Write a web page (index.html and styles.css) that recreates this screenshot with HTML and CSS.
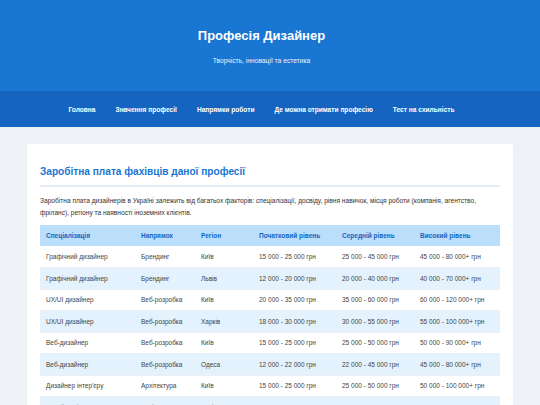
FILE: index.html
```html
<!DOCTYPE html>
<html lang="uk">
<head>
<meta charset="utf-8">
<title>Професія Дизайнер</title>
<link rel="stylesheet" href="styles.css">
</head>
<body>
<header class="site-header">
  <h1 class="site-title">Професія Дизайнер</h1>
  <p class="site-tagline">Творчість, інновації та естетика</p>
</header>
<nav class="site-nav">
  <a href="#">Головна</a>
  <a href="#">Значення професії</a>
  <a href="#">Напрямки роботи</a>
  <a href="#">Де можна отримати професію</a>
  <a href="#">Тест на схильність</a>
</nav>
<main class="main">
  <section class="card">
    <h2 class="card-title">Заробітна плата фахівців даної професії</h2>
    <p class="card-text">Заробітна плата дизайнерів в Україні залежить від багатьох факторів: спеціалізації, досвіду, рівня навичок, місця роботи (компанія, агентство, фріланс), регіону та наявності іноземних клієнтів.</p>
    <table class="salary">
      <colgroup>
        <col class="c-spec"><col class="c-dir"><col class="c-reg"><col class="c-start"><col class="c-mid"><col class="c-high">
      </colgroup>
      <thead>
        <tr><th>Спеціалізація</th><th>Напрямок</th><th>Регіон</th><th>Початковий рівень</th><th>Середній рівень</th><th>Високий рівень</th></tr>
      </thead>
      <tbody>
        <tr><td>Графічний дизайнер</td><td>Брендинг</td><td>Київ</td><td>15 000 - 25 000 грн</td><td>25 000 - 45 000 грн</td><td>45 000 - 80 000+ грн</td></tr>
        <tr><td>Графічний дизайнер</td><td>Брендинг</td><td>Львів</td><td>12 000 - 20 000 грн</td><td>20 000 - 40 000 грн</td><td>40 000 - 70 000+ грн</td></tr>
        <tr><td>UX/UI дизайнер</td><td>Веб-розробка</td><td>Київ</td><td>20 000 - 35 000 грн</td><td>35 000 - 60 000 грн</td><td>60 000 - 120 000+ грн</td></tr>
        <tr><td>UX/UI дизайнер</td><td>Веб-розробка</td><td>Харків</td><td>18 000 - 30 000 грн</td><td>30 000 - 55 000 грн</td><td>55 000 - 100 000+ грн</td></tr>
        <tr><td>Веб-дизайнер</td><td>Веб-розробка</td><td>Київ</td><td>15 000 - 25 000 грн</td><td>25 000 - 50 000 грн</td><td>50 000 - 90 000+ грн</td></tr>
        <tr><td>Веб-дизайнер</td><td>Веб-розробка</td><td>Одеса</td><td>12 000 - 22 000 грн</td><td>22 000 - 45 000 грн</td><td>45 000 - 80 000+ грн</td></tr>
        <tr><td>Дизайнер інтер'єру</td><td>Архітектура</td><td>Київ</td><td>15 000 - 25 000 грн</td><td>25 000 - 50 000 грн</td><td>50 000 - 100 000+ грн</td></tr>
        <tr><td>Дизайнер інтер'єру</td><td>Архітектура</td><td>Львів</td><td>12 000 - 20 000 грн</td><td>20 000 - 40 000 грн</td><td>40 000 - 80 000+ грн</td></tr>
      </tbody>
    </table>
  </section>
</main>
</body>
</html>
```
FILE: styles.css
```css
* { box-sizing: border-box; }
html, body { margin: 0; padding: 0; }
body {
  font-family: "Liberation Sans", Arial, sans-serif;
  background: #eef2f7;
  color: #333;
}
.site-header {
  background: #1976d2;
  color: #fff;
  height: 91px;
  display: flex;
  flex-direction: column;
  align-items: center;
  padding: 27px 17px 0 0;
}
.site-title {
  margin: 0;
  font-size: 13px;
  line-height: 18px;
  font-weight: bold;
}
.site-tagline {
  margin: 11px 0 0;
  font-size: 6.7px;
  line-height: 10px;
  color: #eaf3fc;
}
.site-nav {
  background: #1565c0;
  height: 36px;
  display: flex;
  justify-content: center;
  align-items: center;
  gap: 20px;
  padding-right: 17px;
}
.site-nav a {
  color: #fff;
  text-decoration: none;
  font-weight: bold;
  font-size: 6.6px;
}
.main {
  padding: 17px 27px 0;
}
.card {
  background: #fff;
  border-radius: 3px;
  padding: 21px 13px 20px;
}
.card-title {
  margin: 0;
  color: #1976d2;
  font-size: 10.1px;
  line-height: 14px;
  font-weight: bold;
  padding-bottom: 6px;
  border-bottom: 2px solid #e3edf7;
}
.card-text {
  margin: 8px 0 0;
  font-size: 6.6px;
  line-height: 12px;
  color: #333;
}
.salary {
  margin-top: 6px;
  width: 460px;
  table-layout: fixed;
  border-collapse: collapse;
  font-size: 6.5px;
}
.c-spec { width: 95px; }
.c-dir { width: 60px; }
.c-reg { width: 58px; }
.c-start { width: 83px; }
.c-mid { width: 78px; }
.c-high { width: 86px; }
.salary th {
  background: #bbdefb;
  color: #1565c0;
  font-weight: bold;
  text-align: left;
  height: 21px;
  padding: 0 6px;
}
.salary td {
  height: 21.5px;
  padding: 0 6px;
  color: #444;
  border-bottom: 1px solid #eceff3;
}
.salary tbody tr:nth-child(even) td {
  background: #e3f2fd;
}
```
